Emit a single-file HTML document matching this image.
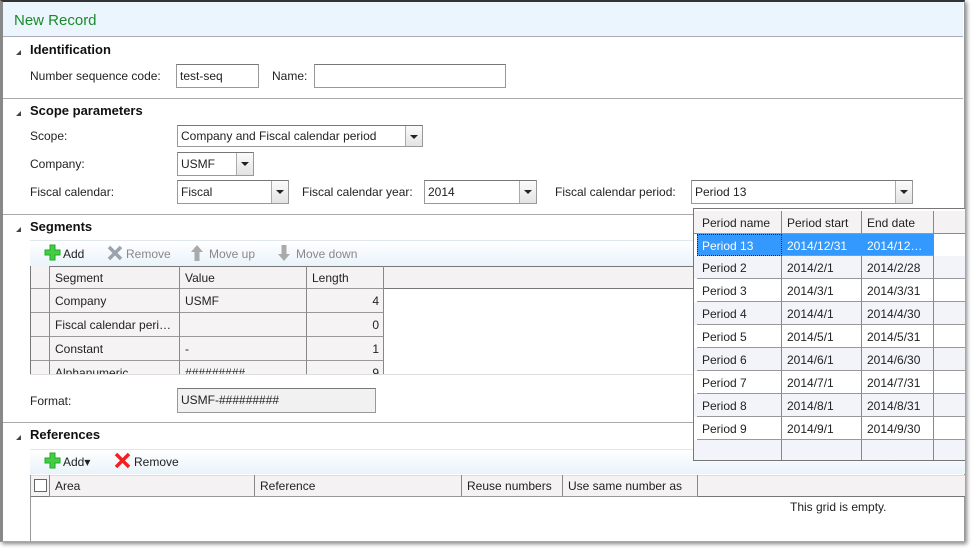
<!DOCTYPE html>
<html><head><meta charset="utf-8"><style>
*{box-sizing:border-box;margin:0;padding:0}
body{width:977px;height:551px;background:#fff;position:relative;overflow:hidden;font-family:"Liberation Sans",sans-serif;font-size:12px;color:#222}
.a{position:absolute;white-space:nowrap}
.win{position:absolute;left:0;top:0;width:965px;height:542px;background:#fff;border-top:2px solid #333;border-left:3px solid #888;border-right:1px solid #999;border-bottom:1px solid #aaa;box-shadow:2px 2px 4px #888}
.hl{position:absolute;height:1px;background:#aaa;left:3px;width:960px}
.hd{font-weight:bold;font-size:13px;color:#111}
.tri{position:absolute;width:0;height:0;border-left:5px solid transparent;border-bottom:5px solid #444}
.inp{position:absolute;border:1px solid #999;border-top-color:#777;background:#fff;padding:4px 3px 0;line-height:15px}
.dd{position:absolute;right:0;top:0;bottom:0;width:17px;border-left:1px solid #aaa;background:linear-gradient(#fbfbfb,#e3e3e3)}
.dd:after{content:"";position:absolute;left:4px;top:9px;border-left:4px solid transparent;border-right:4px solid transparent;border-top:4px solid #222}
.tb{position:absolute;left:30px;width:935px;background:linear-gradient(#fff,#e9f3fb);border-top:1px solid #e0e8ee}
.c{position:absolute;border-right:1px solid #888;border-bottom:1px solid #999;padding-left:5px;padding-top:1px;line-height:22px;overflow:hidden}
.g{color:#888}
svg{position:absolute}
</style></head><body>
<div class="win"></div>
<div class="a" style="left:3px;top:2px;width:960px;height:35px;background:#eaf5fd;border-bottom:1px solid #aab"></div>
<div class="a" style="left:14px;top:12px;font-size:15px;color:#1a8a2a">New Record</div>

<div class="tri" style="left:16px;top:50px"></div>
<div class="a hd" style="left:30px;top:42px">Identification</div>
<div class="a" style="left:30px;top:69px">Number sequence code:</div>
<div class="inp" style="left:176px;top:64px;width:83px;height:24px">test-seq</div>
<div class="a" style="left:272px;top:69px">Name:</div>
<div class="inp" style="left:314px;top:64px;width:192px;height:24px"></div>
<div class="hl" style="top:98px"></div>

<div class="tri" style="left:16px;top:111px"></div>
<div class="a hd" style="left:30px;top:103px">Scope parameters</div>
<div class="a" style="left:30px;top:129px">Scope:</div>
<div class="inp" style="left:177px;top:125px;width:246px;height:22px;padding-top:3px">Company and Fiscal calendar period<div class="dd"></div></div>
<div class="a" style="left:30px;top:157px">Company:</div>
<div class="inp" style="left:177px;top:152px;width:77px;height:24px">USMF<div class="dd"></div></div>
<div class="a" style="left:30px;top:185px">Fiscal calendar:</div>
<div class="inp" style="left:177px;top:180px;width:112px;height:24px">Fiscal<div class="dd"></div></div>
<div class="a" style="left:302px;top:185px">Fiscal calendar year:</div>
<div class="inp" style="left:424px;top:180px;width:113px;height:24px">2014<div class="dd"></div></div>
<div class="a" style="left:555px;top:185px">Fiscal calendar period:</div>
<div class="inp" style="left:691px;top:180px;width:222px;height:24px">Period 13<div class="dd"></div></div>
<div class="hl" style="top:214px"></div>

<div class="tri" style="left:16px;top:227px"></div>
<div class="a hd" style="left:30px;top:219px">Segments</div>
<div class="tb" style="top:240px;height:26px"></div>
<svg style="left:44px;top:244px" width="17" height="17" viewBox="0 0 17 17"><path d="M6 1h5v5h5v5h-5v5H6v-5H1V6h5z" fill="#4c4" stroke="#2a2" stroke-width="1"/></svg>
<div class="a" style="left:63px;top:247px">Add</div>
<svg style="left:107px;top:245px" width="16" height="16" viewBox="0 0 16 16"><path d="M2 2L14 14M14 2L2 14" stroke="#9aa3ad" stroke-width="3.5"/></svg>
<div class="a g" style="left:126px;top:247px">Remove</div>
<svg style="left:190px;top:244px" width="14" height="18" viewBox="0 0 14 18"><path d="M7 1L13 8H9.5V17h-5V8H1z" fill="#aaa"/></svg>
<div class="a g" style="left:209px;top:247px">Move up</div>
<svg style="left:277px;top:244px" width="14" height="18" viewBox="0 0 14 18"><path d="M7 17L13 10H9.5V1h-5v9H1z" fill="#aaa"/></svg>
<div class="a g" style="left:296px;top:247px">Move down</div>

<div class="a" style="left:30px;top:266px;width:935px;height:23px;background:#f4f2f2;border-top:1px solid #777;border-bottom:1px solid #777"></div>
<div class="a" style="left:30px;top:266px;width:354px;height:108px;border-left:1px solid #777;overflow:hidden">
<div class="c" style="left:0;top:0;width:19px;height:23px;background:#f4f2f2"></div>
<div class="c" style="left:19px;top:0;width:130px;height:23px">Segment</div>
<div class="c" style="left:149px;top:0;width:127px;height:23px">Value</div>
<div class="c" style="left:276px;top:0;width:77px;height:23px">Length</div>
<div style="position:absolute;left:0;top:23px;width:353px;height:90px;background:#f5f3f3"></div>
<div class="c" style="left:0;top:23px;width:19px;height:24px"></div><div class="c" style="left:19px;top:23px;width:130px;height:24px">Company</div><div class="c" style="left:149px;top:23px;width:127px;height:24px">USMF</div><div class="c" style="left:276px;top:23px;width:77px;height:24px;text-align:right;padding-right:4px">4</div>
<div class="c" style="left:0;top:47px;width:19px;height:24px"></div><div class="c" style="left:19px;top:47px;width:130px;height:24px">Fiscal calendar peri…</div><div class="c" style="left:149px;top:47px;width:127px;height:24px"></div><div class="c" style="left:276px;top:47px;width:77px;height:24px;text-align:right;padding-right:4px">0</div>
<div class="c" style="left:0;top:71px;width:19px;height:24px"></div><div class="c" style="left:19px;top:71px;width:130px;height:24px">Constant</div><div class="c" style="left:149px;top:71px;width:127px;height:24px">-</div><div class="c" style="left:276px;top:71px;width:77px;height:24px;text-align:right;padding-right:4px">1</div>
<div class="c" style="left:0;top:95px;width:19px;height:24px"></div><div class="c" style="left:19px;top:95px;width:130px;height:24px">Alphanumeric</div><div class="c" style="left:149px;top:95px;width:127px;height:24px">#########</div><div class="c" style="left:276px;top:95px;width:77px;height:24px;text-align:right;padding-right:4px">9</div>
</div>
<div class="a" style="left:30px;top:374px;width:935px;height:1px;background:#ddd"></div>
<div class="a" style="left:30px;top:394px">Format:</div>
<div class="inp" style="left:177px;top:388px;width:199px;height:25px;background:#f1f1f1">USMF-#########</div>
<div class="hl" style="top:422px"></div>

<div class="tri" style="left:16px;top:435px"></div>
<div class="a hd" style="left:30px;top:427px">References</div>
<div class="tb" style="top:449px;height:25px"></div>
<svg style="left:44px;top:452px" width="17" height="17" viewBox="0 0 17 17"><path d="M6 1h5v5h5v5h-5v5H6v-5H1V6h5z" fill="#4c4" stroke="#2a2" stroke-width="1"/></svg>
<div class="a" style="left:63px;top:455px">Add▾</div>
<svg style="left:114px;top:452px" width="17" height="17" viewBox="0 0 17 17"><path d="M2 2L15 15M15 2L2 15" stroke="#e22" stroke-width="3.5"/></svg>
<div class="a" style="left:134px;top:455px">Remove</div>
<div class="a" style="left:30px;top:475px;width:935px;height:22px;background:#f4f2f2;border-bottom:1px solid #777;border-top:1px solid #ddd"></div>
<div class="a" style="left:34px;top:479px;width:13px;height:13px;border:1px solid #666;background:#fff"></div>
<div class="c" style="left:49px;top:475px;width:206px;height:22px;line-height:21px;border-left:1px solid #888">Area</div>
<div class="c" style="left:255px;top:475px;width:207px;height:22px;line-height:21px">Reference</div>
<div class="c" style="left:462px;top:475px;width:101px;height:22px;line-height:21px">Reuse numbers</div>
<div class="c" style="left:563px;top:475px;width:135px;height:22px;line-height:21px">Use same number as</div>
<div class="a" style="left:30px;top:475px;width:1px;height:67px;background:#999"></div>
<div class="a" style="left:790px;top:500px">This grid is empty.</div>

<div class="a" style="left:693px;top:208px;width:272px;height:253px;background:#fff;border:1px solid #777;border-right:none;overflow:hidden">
<div style="position:absolute;left:0;top:2px;width:272px;height:23px;background:#f4f2f2;border-bottom:1px solid #888"></div>
<div class="c" style="left:3px;top:2px;width:85px;height:23px;padding-left:5px">Period name</div>
<div class="c" style="left:88px;top:2px;width:80px;height:23px">Period start</div>
<div class="c" style="left:168px;top:2px;width:72px;height:23px">End date</div>
<div style="position:absolute;left:3px;top:25px;width:237px;height:22px;background:#3399ff"></div>
<div class="c" style="left:3px;top:25px;width:85px;height:22px;color:#fff;outline:1px dotted #222;outline-offset:-1px">Period 13</div>
<div class="c" style="left:88px;top:25px;width:80px;height:22px;color:#fff">2014/12/31</div>
<div class="c" style="left:168px;top:25px;width:72px;height:22px;color:#fff">2014/12…</div>
<div style="position:absolute;left:0;top:47px;width:272px;height:23px;background:#f3f3fa"></div>
<div style="position:absolute;left:0;top:93px;width:272px;height:23px;background:#f3f3fa"></div>
<div style="position:absolute;left:0;top:139px;width:272px;height:23px;background:#f3f3fa"></div>
<div style="position:absolute;left:0;top:185px;width:272px;height:23px;background:#f3f3fa"></div>
<div style="position:absolute;left:0;top:231px;width:272px;height:23px;background:#f3f3fa"></div>
<div id="rows"></div>
</div>
<script>
var r=document.getElementById('rows'),h='';
var d=[[2,'2014/2/1','2014/2/28'],[3,'2014/3/1','2014/3/31'],[4,'2014/4/1','2014/4/30'],[5,'2014/5/1','2014/5/31'],[6,'2014/6/1','2014/6/30'],[7,'2014/7/1','2014/7/31'],[8,'2014/8/1','2014/8/31'],[9,'2014/9/1','2014/9/30'],['','','']];
d.forEach(function(x,i){var t=47+i*23;
h+='<div class="c" style="left:3px;top:'+t+'px;width:85px;height:23px">'+(x[0]!==''?'Period '+x[0]:'')+'</div>'+
'<div class="c" style="left:88px;top:'+t+'px;width:80px;height:23px">'+x[1]+'</div>'+
'<div class="c" style="left:168px;top:'+t+'px;width:72px;height:23px">'+x[2]+'</div>'+
'<div style="position:absolute;left:240px;top:'+(t+22)+'px;width:32px;height:1px;background:#999"></div>';});
r.outerHTML=h;
</script>
</body></html>
